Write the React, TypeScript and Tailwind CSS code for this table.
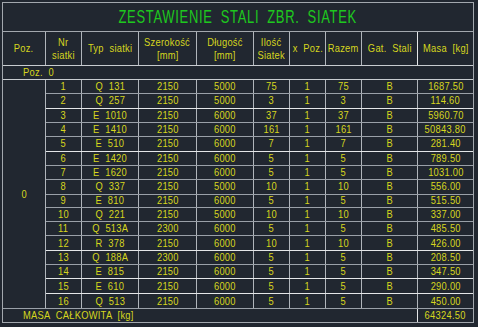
import React from "react";

const rows: string[][] = [
  ["1", "Q  131", "2150", "5000", "75", "1", "75", "B", "1687.50"],
  ["2", "Q  257", "2150", "5000", "3", "1", "3", "B", "114.60"],
  ["3", "E  1010", "2150", "6000", "37", "1", "37", "B", "5960.70"],
  ["4", "E  1410", "2150", "6000", "161", "1", "161", "B", "50843.80"],
  ["5", "E  510", "2150", "6000", "7", "1", "7", "B", "281.40"],
  ["6", "E  1420", "2150", "6000", "5", "1", "5", "B", "789.50"],
  ["7", "E  1620", "2150", "6000", "5", "1", "5", "B", "1031.00"],
  ["8", "Q  337", "2150", "5000", "10", "1", "10", "B", "556.00"],
  ["9", "E  810", "2150", "6000", "5", "1", "5", "B", "515.50"],
  ["10", "Q  221", "2150", "5000", "10", "1", "10", "B", "337.00"],
  ["11", "Q  513A", "2300", "6000", "5", "1", "5", "B", "485.50"],
  ["12", "R  378", "2150", "6000", "10", "1", "10", "B", "426.00"],
  ["13", "Q  188A", "2300", "6000", "5", "1", "5", "B", "208.50"],
  ["14", "E  815", "2150", "6000", "5", "1", "5", "B", "347.50"],
  ["15", "E  610", "2150", "6000", "5", "1", "5", "B", "290.00"],
  ["16", "Q  513", "2150", "6000", "5", "1", "5", "B", "450.00"],
];

const heights = [14, 15, 14, 14, 15, 14, 14, 15, 14, 14, 14, 15, 14, 14, 15, 14];
const bright = [false, true, false, false, true, false, false, false, false, false, false, true, false, true, true, false];

const bodyW = ["w-[36px]", "w-[57px]", "w-[58px]", "w-[57px]", "w-[36px]", "w-[36px]", "w-[36px]", "w-[56px]", "w-[55px]"];

function T({ children, left }: { children: React.ReactNode; left?: boolean }) {
  return (
    <span className={`inline-block whitespace-pre scale-x-[0.85] ${left ? "origin-left" : "origin-center"}`}>
      {children}
    </span>
  );
}

function Row({ cells, h, br, last }: { cells: string[]; h: number; br: boolean; last: boolean }) {
  const hc = h === 15 ? "h-[15px]" : "h-[14px]";
  const bc = last ? "" : br ? "border-b border-[#e4e6e8]" : "border-b border-[#9aa0a8]";
  return (
    <div className={`flex ${hc} ${bc}`}>
      {cells.map((c, i) => (
        <div
          key={i}
          className={`${bodyW[i]} shrink-0 flex items-center justify-center leading-none ${
            i < cells.length - 1 ? "border-r border-[#b0b5bb]" : ""
          }`}
        >
          <T>{c}</T>
        </div>
      ))}
    </div>
  );
}

export default function App() {
  return (
    <div className="w-[478px] h-[327px] bg-[#212730] pt-[2px] pl-[2px] font-['Liberation_Sans',sans-serif] text-[11px] tracking-[0.3px] text-[#d6d61e] overflow-hidden">
      <div className="w-[472px] h-[321px] border border-[#a3a8ae] flex flex-col">
        {/* Title */}
        <div className="h-[29px] shrink-0 border-b border-[#a3a8ae] flex items-center justify-center">
          <span className="inline-block text-[#1ec81e] text-[18px] tracking-[1px] [word-spacing:5px] scale-x-[0.72] whitespace-pre leading-none">
            ZESTAWIENIE STALI ZBR. SIATEK
          </span>
        </div>
        {/* Header */}
        <div className="h-[34px] shrink-0 border-b border-[#c8ccd0] flex leading-[13px] text-center">
          <div className="w-[43px] shrink-0 border-r border-[#b0b5bb] flex items-center justify-center"><T>Poz.</T></div>
          <div className="w-[36px] shrink-0 border-r border-[#b0b5bb] flex flex-col items-center justify-center">
            <T>Nr</T>
            <T>siatki</T>
          </div>
          <div className="w-[57px] shrink-0 border-r border-[#b0b5bb] flex items-center justify-center"><T>Typ  siatki</T></div>
          <div className="w-[58px] shrink-0 border-r border-[#b0b5bb] flex flex-col items-center justify-center">
            <T>Szerokość</T>
            <T>[mm]</T>
          </div>
          <div className="w-[57px] shrink-0 border-r border-[#b0b5bb] flex flex-col items-center justify-center">
            <T>Długość</T>
            <T>[mm]</T>
          </div>
          <div className="w-[36px] shrink-0 border-r border-[#b0b5bb] flex flex-col items-center justify-center">
            <T>Ilość</T>
            <T>Siatek</T>
          </div>
          <div className="w-[36px] shrink-0 border-r border-[#b0b5bb] flex items-center justify-center"><T>x  Poz.</T></div>
          <div className="w-[36px] shrink-0 border-r border-[#b0b5bb] flex items-center justify-center"><T>Razem</T></div>
          <div className="w-[56px] shrink-0 border-r border-[#e4e6e8] flex items-center justify-center"><T>Gat.  Stali</T></div>
          <div className="w-[55px] shrink-0 flex items-center justify-center"><T>Masa  [kg]</T></div>
        </div>
        {/* Poz. 0 */}
        <div className="h-[14px] shrink-0 border-b border-[#c8ccd0] flex items-center pl-[20px] leading-none">
          <T left>Poz.  0</T>
        </div>
        {/* Body */}
        <div className="h-[229px] shrink-0 border-b border-[#9aa0a8] flex">
          <div className="w-[43px] shrink-0 border-r border-[#b0b5bb] flex items-center justify-center"><T>0</T></div>
          <div className="flex flex-col">
            {rows.map((r, i) => (
              <Row key={i} cells={r} h={heights[i]} br={bright[i]} last={i === rows.length - 1} />
            ))}
          </div>
        </div>
        {/* Total */}
        <div className="h-[13px] shrink-0 flex leading-none">
          <div className="w-[415px] shrink-0 border-r border-[#e4e6e8] flex items-center pl-[20px]">
            <T left>MASA  CAŁKOWITA  [kg]</T>
          </div>
          <div className="w-[55px] shrink-0 flex items-center justify-center"><T>64324.50</T></div>
        </div>
      </div>
    </div>
  );
}
